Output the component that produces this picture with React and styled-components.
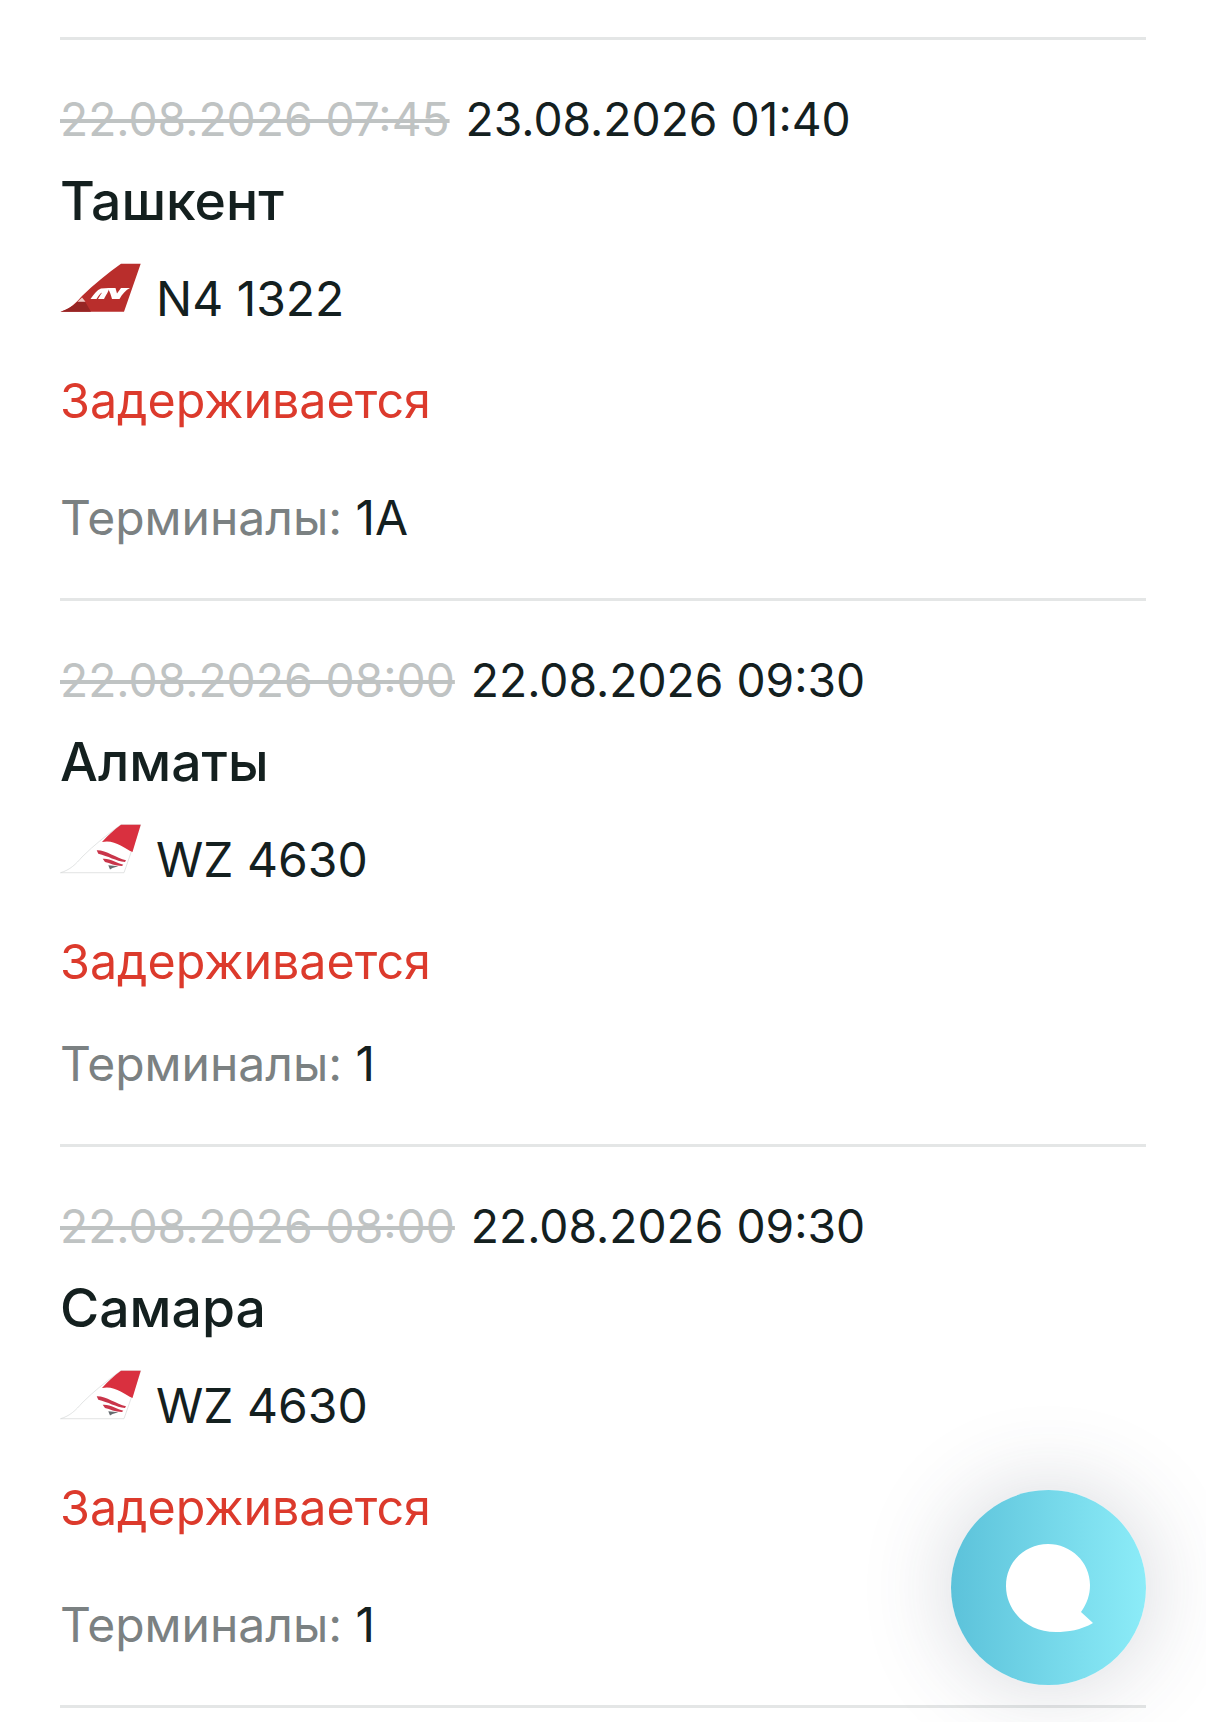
import React from 'react'
import styled, { createGlobalStyle } from 'styled-components'

const GlobalStyle = createGlobalStyle`
  html, body { margin: 0; padding: 0; background: #fff; }
  body { font-family: Inter, "Noto Sans", sans-serif; color: #14201f; }
`

const NordwindTail = () => (
  <TailSvg viewBox="0 0 86 54">
    <path d="M2.5 50.7 C12 48 18 42 24 35 C36 23 50 12 63 2.7 L82.7 2.7 L66 50.7 Z" fill="#b92e2c" />
    <path d="M2.5 50.7 C10 48.5 16 44 20 40.5 L27 40.5 L33 50.7 Z" fill="#962524" />
    <path d="M19.5 40.7 L24 36.5 L27.5 40.7 Z" fill="#efc9c5" />
    <path d="M32.5 38 C36 33 39 29 43 27.5 L51 27 C51 30 48 34 46 38 L40 38 C42 34.5 43.5 32.5 44 31.5 C42 32.5 40.5 35 38.5 38 Z" fill="#fff" />
    <path d="M49.5 27 L57.5 27 L59 32.5 C60 31 62 28.5 63 27 L72 27 C68 29 64 33 61.5 38 L54 38 C53 34 52 31 49.5 27 Z" fill="#fff" />
  </TailSvg>
)

const RedWingsTail = () => (
  <TailSvg viewBox="0 0 86 54">
    <path d="M2.5 50.7 C12 48 18 42 24 35 C36 23 50 12 63 2.7 L82.7 2.7 L66 50.7 Z" fill="#fff" stroke="#d6d8d8" strokeWidth="0.7" />
    <path d="M44 20 C50 13 57 7 63 2.7 L82.7 2.7 L74.5 30 C66 26 56 17 44 20 Z" fill="#d9303f" />
    <path d="M38.7 28.3 C48 28 58 36 68 38.3 L67 40 C58 39 50 34 40.3 31.7 Z" fill="#c9354a" />
    <path d="M44.7 36.7 C52 36 59 41 65.3 42.7 L64 44 C57 44 52 41 47 40 Z" fill="#c9354a" />
    <path d="M50.3 43.3 L60.3 44.3 L54.5 46 L52 47.5 Z" fill="#666c70" />
  </TailSvg>
)

const ChatIcon = () => (
  <svg width="88" height="90" viewBox="0 0 88 90">
    <path d="M43 1 C66 1 85 19 85 42 C85 52 82 60 76 69 L88 80 C76 87 63 89 51 89 C22 89 1 68 1 43 C1 19 20 1 43 1 Z" fill="#fff" />
  </svg>
)

const flights = [
  { oldTime: '22.08.2026 07:45', newTime: '23.08.2026 01:40', city: 'Ташкент', tail: <NordwindTail />, number: 'N4 1322', terminal: '1A', gap: 117 },
  { oldTime: '22.08.2026 08:00', newTime: '22.08.2026 09:30', city: 'Алматы', tail: <RedWingsTail />, number: 'WZ 4630', terminal: '1', gap: 102 },
  { oldTime: '22.08.2026 08:00', newTime: '22.08.2026 09:30', city: 'Самара', tail: <RedWingsTail />, number: 'WZ 4630', terminal: '1', gap: 117 },
]

const App = () => {
  return (
    <Page>
      <GlobalStyle />
      <List>
        {flights.map((f, i) => (
          <Card key={i}>
            <Times>
              <OldTime>{f.oldTime}</OldTime>
              <span>{f.newTime}</span>
            </Times>
            <City>{f.city}</City>
            <Flight>
              {f.tail}
              <FlightNumber>{f.number}</FlightNumber>
            </Flight>
            <Status>Задерживается</Status>
            <Terminals $gap={f.gap}>
              <TerminalLabel>Терминалы:</TerminalLabel> {f.terminal}
            </Terminals>
          </Card>
        ))}
      </List>
      <ChatButton>
        <ChatIcon />
      </ChatButton>
    </Page>
  )
}

const Page = styled.div`
  position: relative;
  width: 1206px;
  height: 1722px;
  overflow: hidden;
  background: #fff;
`

const List = styled.div`
  padding: 37px 60px 0;
`

const Card = styled.div`
  border-top: 3px solid #e4e6e6;
  display: flex;
  flex-direction: column;
  &:last-child {
    border-bottom: 3px solid #e4e6e6;
  }
`

const Times = styled.div`
  display: flex;
  gap: 16px;
  margin-top: 51px;
  font-size: 46.2px;
  line-height: 56px;
  white-space: nowrap;
`

const OldTime = styled.span`
  color: #bfc3c3;
  text-decoration: line-through;
`

const City = styled.div`
  margin-top: 24px;
  font-size: 53.5px;
  font-weight: 500;
  line-height: 60px;
`

const Flight = styled.div`
  display: flex;
  align-items: flex-start;
  gap: 12px;
  margin-top: 30px;
`

const TailSvg = styled.svg`
  width: 86px;
  height: 54px;
  margin-left: -2px;
  flex-shrink: 0;
`

const FlightNumber = styled.span`
  font-size: 48px;
  line-height: 56px;
  margin-top: 10px;
`

const Status = styled.div`
  margin-top: 46px;
  font-size: 48.4px;
  line-height: 56px;
  color: #dc3a2c;
`

const Terminals = styled.div`
  margin-top: ${(p) => p.$gap - 56}px;
  margin-bottom: 52px;
  font-size: 48px;
  line-height: 56px;
`

const TerminalLabel = styled.span`
  color: #7b8182;
`

const ChatButton = styled.div`
  position: absolute;
  left: 951px;
  top: 1490px;
  width: 195px;
  height: 195px;
  border-radius: 50%;
  display: flex;
  align-items: center;
  justify-content: center;
  background: linear-gradient(90deg, #5cc2da 0%, #8cecf8 100%);
  box-shadow: 0 0 90px rgba(60, 70, 90, 0.22);
`

export default App
